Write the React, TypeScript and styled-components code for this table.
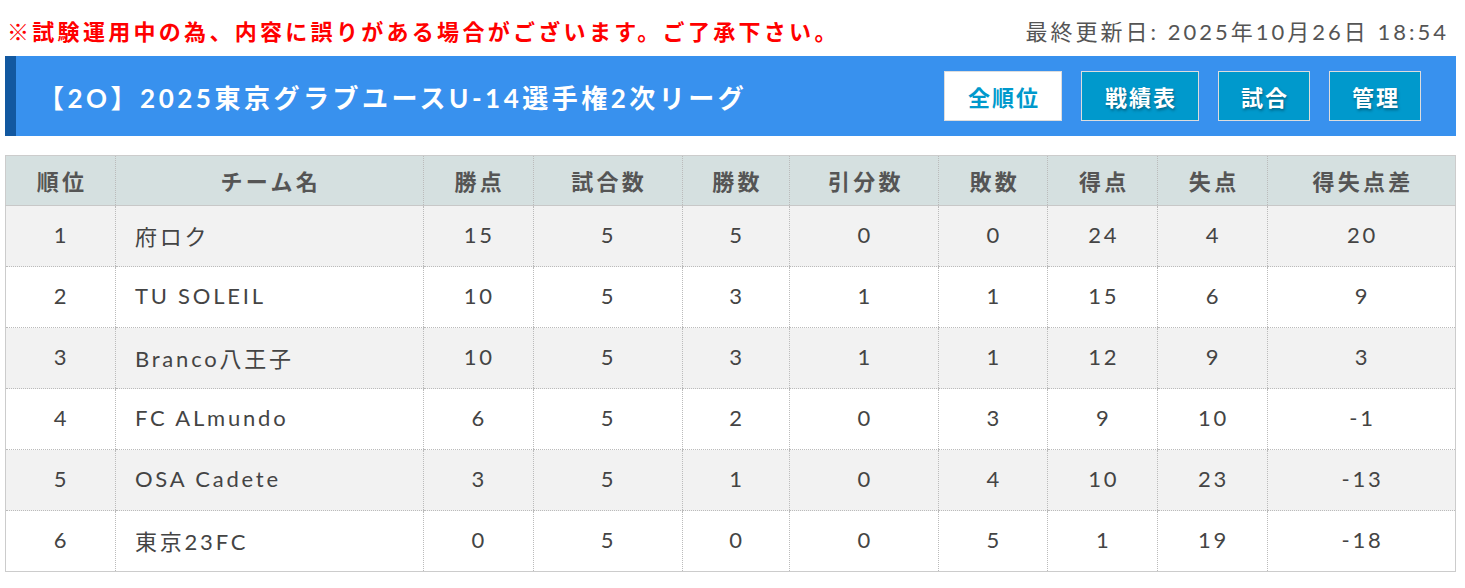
import React from "react";
import styled, { createGlobalStyle } from "styled-components";

const GlobalStyle = createGlobalStyle`
  body {
    margin: 0;
    background: #fff;
    font-family: Lato, "Noto Sans CJK JP", sans-serif;
  }
`;

const Page = styled.div`
  padding: 0 9px 0 5px;
`;

const TopBar = styled.div`
  display: flex;
  justify-content: space-between;
  align-items: center;
  height: 56px;
  padding: 4px 0 0 2px;
  box-sizing: border-box;
`;

const Notice = styled.div`
  color: #ff0000;
  font-size: 22px;
  font-weight: 700;
  letter-spacing: 3.3px;
`;

const Updated = styled.div`
  color: #555;
  font-size: 22px;
  letter-spacing: 3px;
  margin-right: 7px;
`;

const Banner = styled.div`
  display: flex;
  align-items: center;
  justify-content: space-between;
  height: 80px;
  background: #3891ee;
  border-left: 11px solid #1258a0;
  padding: 0 35px 0 22px;
`;

const Title = styled.h1`
  margin: 0;
  color: #fff;
  font-size: 26px;
  font-weight: 700;
  letter-spacing: 3.5px;
`;

const Nav = styled.div`
  display: flex;
  gap: 19px;
`;

const NavButton = styled.div<{ $active?: boolean; $wide?: boolean }>`
  height: 50px;
  width: ${(p) => (p.$wide ? "118px" : "92px")};
  box-sizing: border-box;
  display: flex;
  align-items: center;
  justify-content: center;
  padding-left: 2px;
  border: 1px solid #ddd;
  background: ${(p) => (p.$active ? "#fff" : "#0099cc")};
  color: ${(p) => (p.$active ? "#0099cc" : "#fff")};
  font-size: 22px;
  font-weight: 700;
  letter-spacing: 2px;
  text-shadow: ${(p) => (p.$active ? "none" : "1px 2px 3px rgba(0,0,0,0.35)")};
`;

const Table = styled.table`
  margin-top: 19px;
  width: 100%;
  border-collapse: collapse;
  border: 1px solid #ccc;
  color: #444;
`;

const Th = styled.th`
  height: 47px;
  background: #d5e0e0;
  color: #555;
  font-size: 22px;
  font-weight: 700;
  letter-spacing: 3.3px;
  border-left: 1px dotted #bbb;
  border-bottom: 1px solid #c8c8c8;
  padding: 0 0 2px 3px;
`;

const Row = styled.tr<{ $odd: boolean }>`
  background: ${(p) => (p.$odd ? "#f2f2f2" : "#fff")};
`;

const Td = styled.td<{ $left?: boolean }>`
  height: 57px;
  padding: ${(p) => (p.$left ? "0 0 3px 19px" : "0 0 3px 2px")};
  text-align: ${(p) => (p.$left ? "left" : "center")};
  font-size: 22px;
  letter-spacing: 2.8px;
  border-left: 1px dotted #bbb;
  border-bottom: 1px dotted #bbb;
`;

const columns = [
  { label: "順位", width: 110 },
  { label: "チーム名", width: 308 },
  { label: "勝点", width: 110 },
  { label: "試合数", width: 149 },
  { label: "勝数", width: 108 },
  { label: "引分数", width: 149 },
  { label: "敗数", width: 109 },
  { label: "得点", width: 110 },
  { label: "失点", width: 110 },
  { label: "得失点差", width: 188 },
];

const rows: (string | number)[][] = [
  [1, "府ロク", 15, 5, 5, 0, 0, 24, 4, 20],
  [2, "TU SOLEIL", 10, 5, 3, 1, 1, 15, 6, 9],
  [3, "Branco八王子", 10, 5, 3, 1, 1, 12, 9, 3],
  [4, "FC ALmundo", 6, 5, 2, 0, 3, 9, 10, -1],
  [5, "OSA Cadete", 3, 5, 1, 0, 4, 10, 23, -13],
  [6, "東京23FC", 0, 5, 0, 0, 5, 1, 19, -18],
];

const navItems = ["全順位", "戦績表", "試合", "管理"];

const App = () => {
  return (
    <Page>
      <GlobalStyle />
      <TopBar>
        <Notice>※試験運用中の為、内容に誤りがある場合がございます。ご了承下さい。</Notice>
        <Updated>最終更新日: 2025年10月26日 18:54</Updated>
      </TopBar>

      <Banner>
        <Title>【2O】2025東京グラブユースU-14選手権2次リーグ</Title>
        <Nav>
          {navItems.map((label, i) => (
            <NavButton key={label} $active={i === 0} $wide={label.length > 2}>
              {label}
            </NavButton>
          ))}
        </Nav>
      </Banner>

      <Table>
        <colgroup>
          {columns.map((c) => (
            <col key={c.label} style={{ width: c.width }} />
          ))}
        </colgroup>
        <thead>
          <tr>
            {columns.map((c) => (
              <Th key={c.label}>{c.label}</Th>
            ))}
          </tr>
        </thead>
        <tbody>
          {rows.map((r, i) => (
            <Row key={r[0]} $odd={i % 2 === 0}>
              {r.map((v, j) => (
                <Td key={j} $left={j === 1}>
                  {v}
                </Td>
              ))}
            </Row>
          ))}
        </tbody>
      </Table>
    </Page>
  );
};

export default App;
